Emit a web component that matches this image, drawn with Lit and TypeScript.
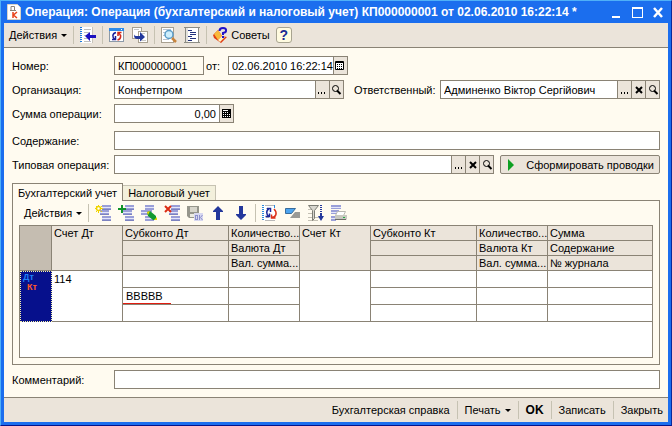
import { LitElement, html, css, svg, nothing } from "lit";
import { customElement, property } from "lit/decorators.js";

const sheet = (x: number, y: number, w: number, h: number) => svg`
  <rect x=${x + 0.5} y=${y + 0.5} width=${w - 1} height=${h - 1} fill="#fff" stroke="#a8a090"/>`;
const bars = svg`
  <path d="M7 0h9v5H7zM5 5h9v5H5zM7 11h9v5H7z" fill="#9a9fd8"/>
  <path d="M7 2h9v1H7zM5 7h9v1H5zM7 13h9v1H7z" fill="#e4e6fa"/>
  <path d="M7 4h9v1H7zM5 9h9v1H5zM7 15h9v1H7z" fill="#7c82c0"/>`;
const loupe = svg`
  <circle cx="5.500" cy="4.500" r="3" fill="none" stroke="#000"/>
  <path d="M7 6.500l3.500 3.500" stroke="#000" stroke-width="2"/>`;

const icons: Record<string, unknown> = {
  doc: svg`
    <path d="M1.500.5h10l3 3v12h-13z" fill="#fff" stroke="#d8d4c8"/>
    <path d="M4 6.500h6M5 6V2.500h3.500V6" stroke="#8c8478" fill="none"/>
    <path d="M7 8v6M11 8l-3.500 3 3.500 3" stroke="#e8431c" stroke-width="1.500" fill="none"/>`,
  goto: svg`
    <rect x="1" y="0" width="12" height="16" fill="#fff"/>
    <path d="M1 0v16" stroke="#1c7be0" stroke-width="2" stroke-dasharray="1 1"/>
    <path d="M4 2.500h7M4 5.500h5M4 8.500h3M4 11.500h5M4 14.500h7" stroke="#bdbdbd"/>
    <path d="M12.500 0v16" stroke="#c8c4ba"/>
    <path d="M5 9l5-4v3h6v3h-6v3z" fill="#1c10c0"/>`,
  refresh: svg`
    <rect x=".5" y="1.500" width="14" height="13" fill="#fff" stroke="#8c9aa8"/>
    <path d="M0 1h15v3H0z" fill="#2f8be8"/><path d="M12 2h1v1h-1z" fill="#fff"/>
    <path d="M7 5.500c-4 1-4 5-1 7M3 12.500h3.500V9" fill="none" stroke="#1b1f9c" stroke-width="1.500"/>
    <path d="M8.500 13c4-1 4-5 1-7M12.500 5.500H9V9" fill="none" stroke="#d0281a" stroke-width="1.500"/>`,
  copy: svg`
    ${sheet(0, 0, 10, 12)}${sheet(6, 4, 10, 12)}
    <path d="M2 2.500h5M8 6.500h5M8 13.500h6" stroke="#c8c8c8"/>
    <path d="M2 4v3q0 2 3 2h3V5l5 5-5 4.500V12H5Q2 12 2 8z" fill="#22389c"/>`,
  find: svg`
    ${sheet(0, 0, 13, 16)}
    <path d="M2 2.500h8M2 5.500h2M2 8.500h2M2 12.500h6" stroke="#b8c4d0"/>
    <circle cx="8" cy="7.500" r="4" fill="#cdeefc" stroke="#5a9cc8" stroke-width="1.500"/>
    <path d="M11 11l4 4" stroke="#c8843c" stroke-width="2.500"/>`,
  list: svg`
    <rect x="1" y=".5" width="14" height="15" fill="#fff"/>
    <path d="M1.500 0v16M14.500 0v16M0 .5h16M0 15.500h16" stroke="#8c8c84"/><path d="M3 1v14" stroke="#c8c4ba"/>
    <path d="M4 3.500h4M6 5.500h6M6 7.500h6M4 9.500h4M6 11.500h6M4 13.500h4" stroke="#20307c"/>`,
  tips: svg`
    <path d="M0 8l5-5 4 6 5 1-6 6-7-5z" fill="#e03c14"/>
    <path d="M1 7l4-4 4 6-4 4z" fill="#f8b83c"/>
    <path d="M5 13l4-4 3 1-5 5z" fill="#fff4c0"/>
    <path d="M6.500 4q0-3 3.500-3t3 3q0 1.500-3 2v2" fill="none" stroke="#2010c8" stroke-width="2"/>
    <path d="M9 9h2v2H9z" fill="#2010c8"/>`,
  add: svg`${bars}<path d="M3 0h1v8H3zM0 3h8v1H0zM1 1h1v1H1zM6 1h1v1H6zM1 6h1v1H1zM6 6h1v1H6z" fill="#f0d400"/>
    <circle cx="3.500" cy="3.500" r="2" fill="#fff" stroke="#f0d400" stroke-width="1.500"/>`,
  plus: svg`${bars}<path d="M3 0h2v3h3v2H5v3H3V5H0V3h3z" fill="#10942a"/>`,
  edit: svg`<path d="M4 0h9v5H4zM0 5h11v5H0zM4 11h9v5H4z" fill="#9a9fd8"/>
    <path d="M4 2h9v1H4zM0 7h11v1H0zM4 13h9v1H4z" fill="#e4e6fa"/>
    <path d="M6 7l3-1 6 5v4h-3l-5-4z" fill="#149a30"/><path d="M6 7l3-1-2 4z" fill="#e8d800"/><path d="M13 15l3-3v3z" fill="#e8d800"/>`,
  del: svg`${bars}<path d="M1 1l6 6M7 1L1 7" stroke="#dc2c14" stroke-width="2"/>`,
  save: svg`
    <path d="M0 1h12v12H2l-2-2z" fill="#96968c"/>
    <path d="M3 2h7v5H3z" fill="#d8d6cc"/><path d="M3 9h4v3H3z" fill="#ecebe2"/>
    <rect x="7" y="8" width="9" height="8" fill="#d8d8f0"/>
    <rect x="8.500" y="10.500" width="2" height="4" fill="none" stroke="#8c90cc"/>
    <path d="M12.500 10v5M15.500 10l-2 2.500 2 2.500" stroke="#8c90cc" fill="none"/>`,
  up: svg`<path d="M8 1l5 5v1h-3v8H6V7H3V6z" fill="#24389c"/>`,
  down: svg`<path d="M8 15l5-5V9h-3V1H6v8H3v1z" fill="#24389c"/>`,
  reread: svg`
    <rect x="1" y="0" width="12" height="16" fill="#fff"/>
    <path d="M1 0v16" stroke="#2b8be0" stroke-width="2" stroke-dasharray="1 1"/>
    <path d="M3 .5h10M3 15.500h10M4 3.500h3M4 12.500h3" stroke="#b8b8b8"/><path d="M12.500 0v3" stroke="#2b8be0"/>
    <path d="M7 4C4 5 4 10 7 11.500M3.500 11.500H7.500V8.500M5 3.500h3.500V7" fill="none" stroke="#1b2a9c" stroke-width="1.500"/>
    <path d="M9.500 12.500c5 0 6-5 2.500-8.500M13.500 13H9.500V9.500" fill="none" stroke="#dc3018" stroke-width="1.500"/>`,
  toggle: svg`
    <path d="M.5 3.500h10l-4 5h-6z" fill="#4ca4f0" stroke="#386c9c"/>
    <path d="M15 7v6H5l5-6z" fill="#9a9a96"/>`,
  filter: svg`
    <path d="M0 4.500h5M0 8.500h5M0 12.500h12M0 15.500h10" stroke="#c4c0b4"/>
    <path d="M.5.500h10l-4 5v8l-2 2v-10z" fill="#d8d6ce" stroke="#7c7c74"/>
    <path d="M13 0v9" stroke="#24389c" stroke-width="2" stroke-dasharray="1 1"/><path d="M10 11h6l-3 5zM12 9h2v3h-2z" fill="#24389c"/>`,
  print: svg`
    <path d="M0 0h10v4H0zM0 5h8v4H0zM0 11h5v5H0z" fill="#9a9fd8"/><path d="M0 2h10v1H0zM0 7h8v1H0zM0 13h5v1H0z" fill="#e4e6fa"/>
    <path d="M6.500 6.500h8l-2 4h-8z" fill="#fff" stroke="#b8b8b0"/><path d="M4 10h12v4l-1 1H4z" fill="#c8c8c0"/><path d="M4 14.500h11" stroke="#6c6c66"/>
    <path d="M12 12h2v1h-2z" fill="#20b040"/>`,
  calendar: svg`<path d="M1.500 1.500h8v8h-8z" fill="#fff" stroke="#000"/><path d="M1 2.500h9" stroke="#000"/>
    <path d="M2 4.500h7M2 6.500h7M2 8.500h7" stroke="#000" stroke-dasharray="1 1" stroke-dashoffset="1"/>`,
  calc: svg`<path d="M1 1h9v9H1z" fill="#000"/>
    <path d="M2 4.500h5M2 6.500h7M2 8.500h7" stroke="#fff" stroke-dasharray="1 1"/><path d="M2 2h5v1H2z" fill="#fff"/>`,
  loupe,
  cross: svg`<path d="M3 3l6 6M9 3L3 9" stroke="#000" stroke-width="2"/>`,
  dots: svg`<path d="M2 8h1v2H2zM5 8h1v2H5zM8 8h1v2H8z" fill="#000"/>`,
  play: svg`<path d="M2 0l6 6-6 6z" fill="#0ea022"/>`,
  min: svg`<path d="M2 10h8v2H2z" fill="#fff"/>`,
  max: svg`<path d="M1 1h11v11H1zM2 3v8h9V3z" fill="#fff" fill-rule="evenodd"/>`,
  close: svg`<path d="M2 2l8 9M10 2l-8 9" stroke="#fff" stroke-width="2.500"/>`,
};

@customElement("ui-icon")
class UiIcon extends LitElement {
  @property() name = "";
  @property({ type: Number }) size = 16;
  static styles = css`
    :host { display: inline-flex; flex: none; }
    svg { display: block; }
  `;
  render() {
    return html`<svg width=${this.size} height=${this.size} viewBox="0 0 ${this.size} ${this.size}" aria-hidden="true">${icons[this.name]}</svg>`;
  }
}

interface Picker { icon: string; label: string }
const pick: Picker = { icon: "dots", label: "Выбрать" };
const clear: Picker = { icon: "cross", label: "Очистить" };
const open: Picker = { icon: "loupe", label: "Открыть" };

@customElement("app-root")
class AppRoot extends LitElement {
  static styles = css`
    :host {
      display: block;
      font: 11px/14px "Liberation Sans", Arial, sans-serif;
      color: #000;
    }
    * { box-sizing: border-box; }
    button, input { font: inherit; color: inherit; margin: 0; padding: 0; border: 0; border-radius: 0; outline: 0; }
    button { background: none; display: inline-flex; align-items: center; white-space: nowrap; }
    .window {
      min-height: 100vh;
      display: flex;
      flex-direction: column;
      background: #1b6eee;
      border-top: 1px solid #4fb0f8;
      border-left: 1px solid #4fb0f8;
      border-right: 1px solid #0a2a9c;
      border-bottom: 1px solid #04148c;
      padding: 0 3px 3px;
    }
    .title {
      height: 22px;
      display: flex;
      align-items: center;
      gap: 3px;
      padding: 0 3px 0 2px;
      color: #fff;
    }
    .title h1 { flex: 1; min-width: 0; margin: 0; font-size: 12px; line-height: 16px; overflow: hidden; white-space: nowrap; }
    .controls { display: flex; gap: 8px; }
    .client { flex: 1; display: flex; flex-direction: column; background: #fffbf0; }
    .bar { display: flex; align-items: center; height: 25px; background: #ebe4da; border-bottom: 1px solid #8a8375; padding: 0 5px; }
    .sep { width: 1px; height: 18px; background: #c6c2b2; margin: 0 6px; flex: none; }
    .arrow { border: 3px solid transparent; border-top-color: #000; border-bottom: 0; margin-left: 4px; }
    .icons { display: flex; gap: 7px; }
    .tips { gap: 2px; margin-right: 6px; }
    .help {
      width: 16px; height: 16px; justify-content: center; background: #fffbe0; border: 1px solid #a8a490; border-radius: 3px;
      font-size: 14px; font-weight: bold; color: #1c2c94;
    }
    .form { flex: 1; display: flex; flex-direction: column; padding: 8px; }
    .row { display: flex; align-items: center; margin-bottom: 5px; }
    .row.wide { margin-bottom: 8px; }
    .name { flex: 0 0 102px; white-space: nowrap; }
    .of { padding: 0 8px 0 2px; }
    .who { padding-left: 10px; white-space: nowrap; flex: 0 0 96px; }
    .field { display: flex; height: 19px; border: 1px solid #8a8375; background: #fff; min-width: 0; }
    .field input { flex: 1; min-width: 0; width: 100%; background: transparent; padding: 0 0 0 3px; }
    .field button { flex: none; width: 14px; justify-content: center; background: #ebe4da; border-left: 1px solid #8a8375; }
    .grow { flex: 1; }
    .org { flex: 230; }
    .person { flex: 220; }
    .number { width: 90px; }
    .number input { background: #fffbf0; }
    .date, .sum { width: 120px; }
    .sum input { text-align: right; padding-right: 3px; }
    .generate {
      flex: 0 0 160px; height: 19px; margin-left: 6px; padding: 0 5px; justify-content: space-between;
      background: #ebe4da; border: 1px solid #8a8375; border-radius: 2px;
    }
    .tabs { display: flex; align-items: flex-end; margin-top: 4px; }
    .tab { height: 15px; padding: 0 5px; background: #f3f0dc; border: 1px solid #c6c2b2; border-left: 0; border-bottom: 0; }
    .tab.active { height: 18px; margin-bottom: -1px; background: #fffbf0; border: 1px solid #8a8375; border-bottom: 0; z-index: 1; }
    .panel { flex: 1; display: flex; flex-direction: column; border: 1px solid #8a8375; padding: 0 6px 6px; }
    .tools { display: flex; align-items: center; height: 24px; padding-left: 5px; }
    .grid { flex: 1; background: #fff; border: 1px solid #8a8375; min-height: 132px; }
    table { width: 100%; table-layout: fixed; border-collapse: separate; border-spacing: 0; }
    th, td { padding: 0 0 0 2px; height: 15px; border: solid #8a8375; border-width: 0 1px 1px 0; font-weight: normal; text-align: left; vertical-align: top; white-space: nowrap; overflow: hidden; }
    .last { border-right: 0; }
    th { background: #ebe4da; }
    td { height: 17px; line-height: 16px; }
    .corner { background: #c5bdb1; }
    .mark { background: #06108c; border: 1px dotted #f8f4a8; font-size: 9px; font-weight: bold; line-height: 10px; }
    .mark span { display: block; color: #2080f8; }
    .mark span + span { color: #ff5a28; padding-left: 4px; }
    .c0 { width: 32px; } .c1 { width: 71px; } .c2 { width: 106px; } .c3 { width: 104px; }
    .marked { padding-left: 0; }
    .under { display: block; width: 48px; height: 16px; padding-left: 3px; border-bottom: 1px solid #e01c10; }
    .comment { display: flex; align-items: center; margin-top: 5px; }
    .footer { justify-content: flex-end; border-top: 1px solid #8a8375; border-bottom: 0; }
    .footer .sep { margin: 0 7px; }
    .ok { font-weight: bold; font-size: 12px; }
  `;

  private field(id: string, cls: string, value = "", pickers: Picker[] = []) {
    return html`<div class="field ${cls}">
      <input id=${id} .value=${value}>
      ${pickers.map(p => html`<button aria-label=${p.label}><ui-icon name=${p.icon} size="12"></ui-icon></button>`)}
    </div>`;
  }

  private tool(name: string, label: string) {
    return html`<button aria-label=${label}><ui-icon name=${name}></ui-icon></button>`;
  }

  private sep = html`<span class="sep"></span>`;

  render() {
    return html`<div class="window">
      <header class="title">
        <ui-icon name="doc"></ui-icon>
        <h1>Операция: Операция (бухгалтерский и налоговый учет) КП000000001 от 02.06.2010 16:22:14 *</h1>
        <div class="controls">
          ${[["min", "Свернуть"], ["max", "Развернуть"], ["close", "Закрыть окно"]].map(([n, l]) =>
            html`<button aria-label=${l}><ui-icon name=${n} size="13"></ui-icon></button>`)}
        </div>
      </header>
      <main class="client">
        <div class="bar">
          <button>Действия<span class="arrow"></span></button>${this.sep}
          ${this.tool("goto", "Перейти")}${this.sep}
          <div class="icons">${this.tool("refresh", "Обновить")}${this.tool("copy", "Скопировать")}</div>${this.sep}
          <div class="icons">${this.tool("find", "Найти")}${this.tool("list", "Список")}</div>${this.sep}
          <button class="tips"><ui-icon name="tips"></ui-icon>Советы</button>
          <button class="help" aria-label="Справка">?</button>
        </div>
        <div class="form">
          <div class="row">
            <label class="name" for="number">Номер:</label>${this.field("number", "number", "КП000000001")}
            <label class="of" for="date">от:</label>${this.field("date", "date", "02.06.2010 16:22:14", [{ icon: "calendar", label: "Календарь" }])}
          </div>
          <div class="row">
            <label class="name" for="org">Организация:</label>${this.field("org", "org", "Конфетпром", [pick, open])}
            <label class="who" for="person">Ответственный:</label>${this.field("person", "person", "Админенко Віктор Сергійович", [pick, clear, open])}
          </div>
          <div class="row wide">
            <label class="name" for="sum">Сумма операции:</label>${this.field("sum", "sum", "0,00", [{ icon: "calc", label: "Калькулятор" }])}
          </div>
          <div class="row">
            <label class="name" for="content">Содержание:</label>${this.field("content", "grow")}
          </div>
          <div class="row">
            <label class="name" for="typical">Типовая операция:</label>${this.field("typical", "grow", "", [pick, clear, open])}
            <button class="generate"><ui-icon name="play" size="12"></ui-icon>Сформировать проводки</button>
          </div>
          <div class="tabs" role="tablist">
            <button class="tab active" role="tab" aria-selected="true">Бухгалтерский учет</button>
            <button class="tab" role="tab" aria-selected="false">Налоговый учет</button>
          </div>
          <section class="panel">
            <div class="tools">
              <button>Действия<span class="arrow"></span></button>${this.sep}
              <div class="icons">
                ${this.tool("add", "Добавить")}${this.tool("plus", "Добавить копированием")}${this.tool("edit", "Изменить")}
                ${this.tool("del", "Удалить")}${this.tool("save", "Записать строку")}${this.tool("up", "Вверх")}${this.tool("down", "Вниз")}
              </div>${this.sep}
              <div class="icons">
                ${this.tool("reread", "Обновить")}${this.tool("toggle", "Включить")}${this.tool("filter", "Отбор")}${this.tool("print", "Вывести список")}
              </div>
            </div>
            <div class="grid">
              <table>
                <colgroup>
                  <col class="c0"><col class="c1"><col class="c2"><col class="c1"><col class="c1"><col class="c2"><col class="c1"><col class="c3">
                </colgroup>
                <thead>
                  <tr><th class="corner" rowspan="3"></th><th rowspan="3">Счет Дт</th><th>Субконто Дт</th><th>Количество...</th><th rowspan="3">Счет Кт</th><th>Субконто Кт</th><th>Количество...</th><th class="last">Сумма</th></tr>
                  <tr><th></th><th>Валюта Дт</th><th></th><th>Валюта Кт</th><th class="last">Содержание</th></tr>
                  <tr><th></th><th>Вал. сумма...</th><th></th><th>Вал. сумма...</th><th class="last">№ журнала</th></tr>
                </thead>
                <tbody>
                  ${[0, 1, 2].map(i => html`<tr>
                    ${i === 0 ? html`<td class="mark" rowspan="3"><span>Дт</span><span>Кт</span></td><td rowspan="3">114</td>` : nothing}
                    <td class="marked">${i === 1 ? html`<span class="under">BBBBB</span>` : nothing}</td><td></td>
                    ${i === 0 ? html`<td rowspan="3"></td>` : nothing}
                    <td></td><td></td><td class="last"></td>
                  </tr>`)}
                </tbody>
              </table>
            </div>
          </section>
          <div class="comment">
            <label class="name" for="comment">Комментарий:</label>${this.field("comment", "grow")}
          </div>
        </div>
        <footer class="bar footer">
          <button>Бухгалтерская справка</button>${this.sep}
          <button>Печать<span class="arrow"></span></button>${this.sep}
          <button class="ok">OK</button>${this.sep}
          <button>Записать</button>${this.sep}
          <button>Закрыть</button>
        </footer>
      </main>
    </div>`;
  }
}
